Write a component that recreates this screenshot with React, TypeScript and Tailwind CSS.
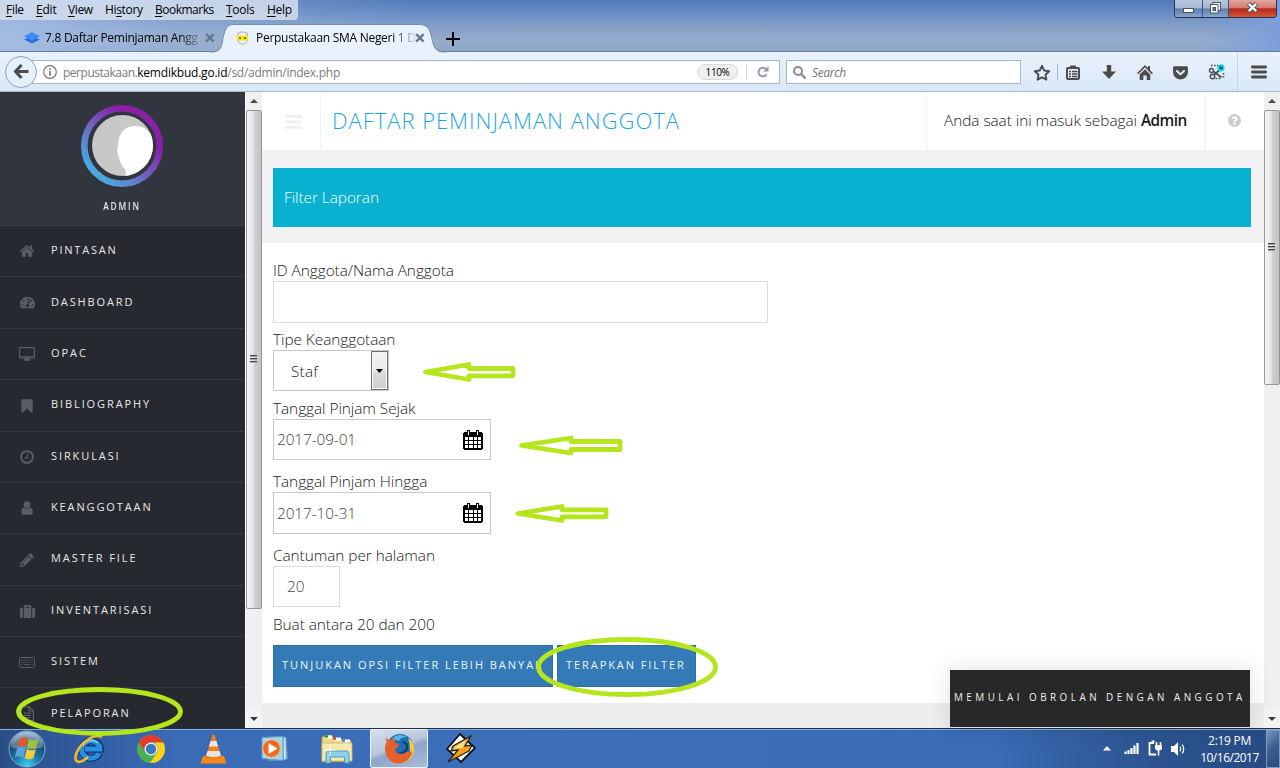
import type { ReactNode } from "react";
import { FaTachometerAlt, FaSuitcase, FaGetPocket } from "react-icons/fa";

const CIRCLE =
  "M1664 896q0 209-103 385.5t-279.5 279.5-385.5 103-385.5-103-279.5-279.5-103-385.5 103-385.5 279.5-279.5 385.5-103 385.5 103 279.5 279.5 103 385.5z";

function Glyph({ d, box = "0 0 1792 1792", size = 16 }: { d: string; box?: string; size?: number }) {
  return (
    <svg width={size} height={size} viewBox={box} fill="currentColor" fillRule="evenodd">
      <path d={d} />
    </svg>
  );
}

const homePath =
  "M1408 992v480q0 26-19 45t-45 19h-384v-384h-256v384h-384q-26 0-45-19t-19-45v-480q0-1 .5-3t.5-3l575-474 575 474q1 2 1 6zm223-69l-62 74q-8 9-21 11h-3q-13 0-21-7l-692-577-692 577q-12 8-24 7-13-2-21-11l-62-74q-8-10-7-23.5t11-21.5l719-599q32-26 76-26t76 26l244 204v-195q0-14 9-23t23-9h192q14 0 23 9t9 23v408l219 182q10 8 11 21.5t-7 23.5z";
const userPath =
  "M1536 1399q0 109-62.5 187t-150.5 78h-854q-88 0-150.5-78t-62.5-187q0-85 8.5-160.5t31.5-152 58.5-131 94-89 134.5-34.5q131 128 313 128t313-128q76 0 134.5 34.5t94 89 58.5 131 31.5 152 8.5 160.5zm-256-887q0 159-112.5 271.5t-271.5 112.5-271.5-112.5-112.5-271.5 112.5-271.5 271.5-112.5 271.5 112.5 112.5 271.5z";
const pencilPath =
  "M491 1536l91-91-235-235-91 91v107h128v128h107zm523-928q0-22-22-22-10 0-17 7l-542 542q-7 7-7 17 0 22 22 22 10 0 17-7l542-542q7-7 7-17zm-54-192l416 416-832 832h-416v-416zm683 96q0 53-37 90l-166 166-416-416 166-165q36-38 90-38 53 0 91 38l235 234q37 39 37 91z";
const bookmarkPath =
  "M1420 128q23 0 44 9 33 13 52.5 41t19.5 62v1289q0 34-19.5 62t-52.5 41q-19 8-44 8-48 0-83-32l-441-424-441 424q-36 33-83 33-23 0-44-9-33-13-52.5-41t-19.5-62v-1289q0-34 19.5-62t52.5-41q21-9 44-9h1048z";
const clockPath =
  "M1024 544v448q0 14-9 23t-23 9h-320q-14 0-23-9t-9-23v-64q0-14 9-23t23-9h224v-352q0-14 9-23t23-9h64q14 0 23 9t9 23zM1440 896q0-148-73-273t-198-198-273-73-273 73-198 198-73 273 73 273 198 198 273 73 273-73 198-198 73-273z" +
  CIRCLE;
const questionPath =
  "M1024 1376v-192q0-14-9-23t-23-9h-192q-14 0-23 9t-9 23v192q0 14 9 23t23 9h192q14 0 23-9t9-23zm256-672q0-88-55.5-163t-138.5-116-170-41q-243 0-371 213-15 24 8 42l132 100q7 6 19 6 16 0 25-12 53-68 86-92 34-24 86-24 48 0 85.5 26t37.5 59q0 38-20 61t-68 45q-63 28-115.5 86.5t-52.5 125.5v36q0 14 9 23t23 9h192q14 0 23-9t9-23q0-19 21.5-49.5t54.5-49.5q32-18 49-28.5t46-35 44.5-48 28-60.5 12.5-81z" +
  CIRCLE;

const Desktop = () => (
  <svg width="16" height="14" viewBox="0 0 16 14" fill="none" stroke="currentColor" strokeWidth="1.2">
    <rect x="0.6" y="0.6" width="14.8" height="10.4" rx="0.8" />
    <path d="M0.6 9.8h14.8" />
    <path d="M6 11.5h4v1.2H6zM5 13.2h6" />
  </svg>
);
const Keyboard = () => (
  <svg width="16" height="11" viewBox="0 0 16 11" fill="none" stroke="currentColor">
    <rect x="0.5" y="0.5" width="15" height="10" rx="1" />
    <path d="M2.5 3h11.2M2.5 5.2h11.2" strokeDasharray="1.2 0.9" />
    <path d="M2.5 7.6h1.2M5 7.6h6M12.4 7.6h1.2" />
  </svg>
);
const FileText = () => (
  <svg width="13" height="15" viewBox="0 0 13 15" fill="none" stroke="currentColor" strokeWidth="1.2">
    <path d="M0.6 0.6h7.4l4.4 4.4v9.4H0.6zM8 0.6V5h4.4M3 7.2h7M3 9.4h7M3 11.6h7" />
  </svg>
);

const menu: { label: string; icon: ReactNode; cls: string; text: string }[] = [
  { label: "PINTASAN", icon: <Glyph d={homePath} box="0 0 1664 1792" />, cls: "h-[51px]", text: "pb-[2px] tracking-[1.8px]" },
  { label: "DASHBOARD", icon: <FaTachometerAlt size={15} />, cls: "h-[52px]", text: "tracking-[1.88px]" },
  { label: "OPAC", icon: <Desktop />, cls: "h-[51px]", text: "pb-[2px] tracking-[1.95px]" },
  { label: "BIBLIOGRAPHY", icon: <Glyph d={bookmarkPath} />, cls: "h-[52px]", text: "pb-[2px] tracking-[1.9px]" },
  { label: "SIRKULASI", icon: <Glyph d={clockPath} />, cls: "h-[51px]", text: "pb-[2px] tracking-[1.9px]" },
  { label: "KEANGGOTAAN", icon: <Glyph d={userPath} />, cls: "h-[51px]", text: "pb-[2px] tracking-[1.88px]" },
  { label: "MASTER FILE", icon: <Glyph d={pencilPath} />, cls: "h-[52px]", text: "pb-[2px] tracking-[1.92px]" },
  { label: "INVENTARISASI", icon: <FaSuitcase size={15} />, cls: "h-[51px]", text: "pb-[2px] tracking-[1.92px]" },
  { label: "SISTEM", icon: <Keyboard />, cls: "h-[51px]", text: "pb-[2px] tracking-[1.95px]" },
  { label: "PELAPORAN", icon: <FileText />, cls: "h-[51px]", text: "tracking-[1.88px]" },
];

const browserMenu = [
  { first: "F", rest: "ile", cls: "w-[30px] tracking-[-0.3px]" },
  { first: "E", rest: "dit", cls: "w-[32px] tracking-[-0.2px]" },
  { first: "V", rest: "iew", cls: "w-[37px] tracking-[-0.4px]" },
  { pre: "Hi", first: "s", rest: "tory", cls: "w-[50px] tracking-[-0.33px]" },
  { first: "B", rest: "ookmarks", cls: "w-[71px] tracking-[-0.5px]" },
  { first: "T", rest: "ools", cls: "w-[41px] tracking-[-0.3px]" },
  { first: "H", rest: "elp", cls: "w-[28px] tracking-[-0.3px]" },
];

function TabClose() {
  return (
    <svg width="10" height="10" viewBox="0 0 10 10" className="shrink-0" stroke="#66778d" strokeWidth="2.4">
      <path d="M1.2 1.2l7.4 7.4M8.6 1.2L1.2 8.6" />
    </svg>
  );
}

function TitleBar() {
  return (
    <div className="relative h-[52px] bg-[linear-gradient(90deg,#a9c1e8cc_0%,#9db6dc66_14%,transparent_34%,transparent_94%,#7c9edb_100%),linear-gradient(180deg,#507ab9_0%,#6288c2_20%,#88a2c8_55%,#96accb_80%,#8ea5c6_100%)]">
      <div className="flex justify-between">
        <div className="flex h-5 w-[298px] items-center rounded-br-[4px] bg-[#d5dfef]/85 pl-[6px] text-[12px] leading-5 text-black">
          {browserMenu.map((m) => (
            <span key={m.rest} className={m.cls}>
              {m.pre}
              <span className="underline underline-offset-2">{m.first}</span>
              {m.rest}
            </span>
          ))}
        </div>
        <div className="mr-[3px] flex h-[18px] w-[103px] overflow-hidden rounded-b-[4px] border border-t-0 border-[#26354d]">
          <div className="flex w-[28px] items-end justify-center border-r border-[#3c5580] bg-[linear-gradient(#b9c7dd_0%,#a3b5d1_48%,#5c7cad_52%,#89a6d0_100%)] pb-[4px]">
            <div className="h-[5px] w-[11px] border border-[#4d5360] bg-white" />
          </div>
          <div className="flex w-[26px] items-start justify-center border-r border-[#3c5580] bg-[linear-gradient(#b9c7dd_0%,#a3b5d1_48%,#5c7cad_52%,#89a6d0_100%)] pt-[2px]">
            <svg width="13" height="12" viewBox="0 0 13 12" fill="#fff" stroke="#4d5360">
              <rect x="4" y="0.5" width="7.5" height="8" />
              <rect x="1.5" y="2.5" width="7.5" height="8.5" />
              <rect x="4" y="5.5" width="2.5" height="3" fill="#5c7cad" />
            </svg>
          </div>
          <div className="flex flex-1 items-start justify-center bg-[linear-gradient(#e3a79c_0%,#d27d6f_45%,#b5281a_52%,#d4573a_100%)] pt-[2px]">
            <svg width="13" height="11" viewBox="0 0 13 11">
              <path d="M2.5 1.5l8 8M10.5 1.5l-8 8" stroke="#4d4a55" strokeWidth="4.4" />
              <path d="M2.8 1.8l7.4 7.4M10.2 1.8L2.8 9.2" stroke="#fff" strokeWidth="2.4" />
            </svg>
          </div>
        </div>
      </div>
      <div className="absolute inset-x-0 bottom-0 flex h-7 border-b border-[#5f7ea8]">
        <div className="flex w-[218px] items-center pl-[24px]">
          <svg width="16" height="12" viewBox="0 0 16 12" className="shrink-0">
            <path d="M0 7.5l8-3.4 8 3.4-8 4z" fill="#2a6fdc" />
            <path d="M0 4.2L8 0l8 4.2-8 4.3z" fill="#3f8cff" />
          </svg>
          <span className="ml-[5px] w-[160px] bg-[linear-gradient(90deg,#000_84%,#00000022_97%)] bg-clip-text pt-px text-[12px] tracking-[-0.27px] whitespace-nowrap text-transparent">
            7.8 Daftar Peminjaman Angg
          </span>
          <span className="pt-px">
            <TabClose />
          </span>
        </div>
        <div className="relative flex w-[221px] items-center pl-[18px]">
          <svg width="236" height="29" viewBox="0 0 236 29" className="absolute top-0 left-[-8px]">
            <path d="M0 28.5C14 28.5 11 20 14 10C16 2 19 0.5 25 0.5H208C216 0.5 219 3 221 11C224 22 223 28.5 236 28.5Z" fill="#e9f2fc" />
            <path d="M0 28C14 28 11 20 14 10C16 2 19 0.5 25 0.5H208C216 0.5 219 3 221 11C224 22 223 28 236 28" fill="none" stroke="#6f8db5" />
          </svg>
          <svg width="13" height="14" viewBox="0 0 13 14" className="relative shrink-0">
            <path d="M1 2q5.500-3.600 11 0v7.500q-1.500 4-5.500 4.300Q2.500 13.500 1 9.500z" fill="#bfc4c8" />
            <path d="M2.500 3q4-2.500 8 0v7q-1.500 2.500-4 2.600Q4 12.500 2.500 10z" fill="#eceeea" />
            <rect x="0.500" y="4.500" width="12" height="5" rx="2.400" fill="#f6ea10" />
            <path d="M3 7h2M8 7h2" stroke="#5a4c00" strokeWidth="1.600" />
          </svg>
          <span className="relative ml-[7px] w-[159px] bg-[linear-gradient(90deg,#000_86%,#00000022_99%)] bg-clip-text pt-px text-[12px] tracking-[-0.28px] whitespace-nowrap text-transparent">
            Perpustakaan SMA Negeri 1 D
          </span>
          <span className="relative pt-px">
            <TabClose />
          </span>
        </div>
        <div className="flex items-center pt-[2px] pl-[7px]">
          <svg width="14" height="14" viewBox="0 0 14 14" stroke="#000" strokeWidth="2">
            <path d="M7 0v14M0 7h14" />
          </svg>
        </div>
      </div>
    </div>
  );
}

function Toolbar() {
  return (
    <div className="flex h-10 items-center border-b border-[#a3b8cf] bg-[linear-gradient(#e9f2fc,#d9e8f7)] pl-[5px]">
      <div className="relative z-10 flex h-[32px] w-[32px] shrink-0 items-center justify-center rounded-full border border-[#8fa3bb] bg-[#e6f0fa]">
        <svg width="16" height="15" viewBox="0 0 16 15" fill="none" stroke="#4a4c50" strokeWidth="3">
          <path d="M8.500 1L2.500 7.500l6 6.500M2.500 7.500H15.500" />
        </svg>
      </div>
      <div className="mt-px -ml-[5px] flex h-6 w-[748px] shrink-0 items-center border border-[#a9bacd] bg-white pl-[10px]">
        <svg width="14" height="14" viewBox="0 0 14 14" fill="none" stroke="#75777a">
          <circle cx="7" cy="7" r="6.300" strokeWidth="1.200" />
          <path d="M7 6v4.800M7 3.200v1.700" strokeWidth="1.700" />
        </svg>
        <div className="ml-[6px] flex w-[634px] pt-px text-[12px] text-[#7b7b7b]">
          <span className="tracking-[-0.48px]">perpustakaan.</span>
          <span className="tracking-[-0.22px] text-black">kemdikbud.go.id</span>
          <span className="tracking-[-0.26px]">/sd/admin/index.php</span>
        </div>
        <div className="flex h-4 w-[41px] shrink-0 items-center justify-center rounded-full border border-[#dadada] bg-[#efefef] text-[10px] tracking-[-0.4px] text-black">
          110%
        </div>
        <div className="ml-[8px] h-4 w-px bg-[#dcdcdc]" />
        <svg width="12" height="12" viewBox="0 0 12 12" fill="none" className="ml-[10px]">
          <path d="M9.500 8.200A4.300 4.300 0 1 1 9 3.200" stroke="#8f9aa8" strokeWidth="2" />
          <path d="M11.500 0v5.500H6z" fill="#8f9aa8" />
        </svg>
      </div>
      <div className="mt-px ml-[6px] flex h-6 w-[235px] shrink-0 items-center border border-[#a9bacd] bg-white pl-[6px]">
        <svg width="13" height="13" viewBox="0 0 13 13" fill="none" stroke="#8b8b8b" strokeWidth="2">
          <circle cx="5" cy="5" r="4" />
          <path d="M8 8l4.500 4.500" strokeWidth="2.400" />
        </svg>
        <span className="ml-[6px] pt-px text-[12px] tracking-[-0.35px] text-[#757575] italic">Search</span>
      </div>
      <div className="flex h-full flex-1 items-center pt-px text-[#4c4c4c]">
        <svg width="18" height="17" viewBox="0 0 18 17" fill="none" stroke="currentColor" strokeWidth="1.900" className="ml-[12px]">
          <path d="M9 1.800l2.200 4.700 5 .7-3.700 3.500.9 5L9 13.300l-4.400 2.400.9-5L1.800 7.200l5-.7z" strokeLinejoin="round" />
        </svg>
        <div className="ml-[6px] h-4 w-px bg-[#a9bacd]" />
        <svg width="14" height="15" viewBox="0 0 14 15" className="ml-[8px]" fill="none" stroke="currentColor">
          <rect x="1" y="3" width="12" height="11" rx="1" strokeWidth="2" />
          <path d="M4 2h6" strokeWidth="3" />
          <path d="M3 6.500h2M6 6.500h5.500M3 9h2M6 9h5.500M3 11.500h2M6 11.500h5.500" strokeWidth="1.300" />
        </svg>
        <svg width="14" height="14" viewBox="0 0 14 14" className="ml-[22px]" fill="currentColor">
          <path d="M4.800 0h4.400v6.500H14L7 14 0 6.500h4.800z" />
        </svg>
        <svg width="16" height="15" viewBox="0 0 16 15" className="ml-[21px]" fill="currentColor">
          <path d="M8 0l3 3V1h2v4l3 3.200-1.200 1.100L8 2.600 1.200 9.300 0 8.200z" />
          <path d="M8 4.200l5.300 5.300V15h-3.600v-4.500H6.300V15H2.700V9.500z" />
        </svg>
        <FaGetPocket size={17} className="ml-[19px]" />
        <svg width="17" height="16" viewBox="0 0 17 16" className="ml-[19px]" fill="none" stroke="currentColor">
          <circle cx="3.500" cy="6.500" r="2" strokeWidth="1.400" />
          <circle cx="4.500" cy="12.500" r="2.200" strokeWidth="1.400" />
          <path d="M5.500 7.500l8 6M6 11l6-5.500" strokeWidth="1.700" />
          <path d="M3 1.500h7M15.500 9v6M7.500 14.500h6" strokeWidth="1.600" strokeDasharray="1.600 1.400" />
          <circle cx="13" cy="3.800" r="3.600" fill="#00e0ee" stroke="none" />
          <path d="M13 1.800v4M11.200 2.800l3.600 2M14.800 2.800l-3.600 2" stroke="#123a55" strokeWidth="1" />
        </svg>
        <div className="ml-[12px] h-full w-px bg-[#b9c9da]/70" />
        <svg width="16" height="14" viewBox="0 0 16 14" className="ml-[13px]" stroke="currentColor" strokeWidth="2.800" strokeLinecap="round">
          <path d="M1.400 2h13.200M1.400 7h13.200M1.400 12h13.200" />
        </svg>
      </div>
    </div>
  );
}

function ScrollBar({ thumb, rest, kind }: { thumb: string; rest: string; kind: string }) {
  return (
    <div className={kind}>
      <div className="flex h-[18px] items-center justify-center">
        <svg width="8" height="4" viewBox="0 0 8 4">
          <path d="M4 0l4 4H0z" fill="#4a4a4a" />
        </svg>
      </div>
      <div className={thumb}>
        <div className="flex h-[8px] w-[7px] flex-col justify-between">
          <div className="h-[2px] border-b border-[#a8a8a8] bg-[#444]" />
          <div className="h-[2px] border-b border-[#a8a8a8] bg-[#444]" />
          <div className="h-[2px] border-b border-[#a8a8a8] bg-[#444]" />
        </div>
      </div>
      <div className={rest} />
      <div className="flex h-[18px] items-center justify-center bg-[#f3f3f3]">
        <svg width="8" height="4" viewBox="0 0 8 4">
          <path d="M0 0h8L4 4z" fill="#3a3a3a" />
        </svg>
      </div>
    </div>
  );
}

function Sidebar() {
  return (
    <div className="flex w-[245px] shrink-0 flex-col overflow-hidden bg-[#262930]">
      <div className="flex h-[134px] shrink-0 flex-col items-center border-b border-[#3a3d43] bg-[#31353e] pt-[13px] pr-px">
        <svg width="82" height="82" viewBox="0 0 82 82">
          <defs>
            <linearGradient id="ring" x1="0.15" y1="0.85" x2="0.8" y2="0.15">
              <stop offset="0" stopColor="#4aa8e0" />
              <stop offset="0.45" stopColor="#6f62c0" />
              <stop offset="0.85" stopColor="#8a1fa8" />
            </linearGradient>
            <clipPath id="face">
              <circle cx="41.5" cy="40.500" r="30.500" />
            </clipPath>
          </defs>
          <circle cx="41" cy="41" r="37.700" fill="none" stroke="url(#ring)" strokeWidth="6.600" />
          <g clipPath="url(#face)">
            <rect width="82" height="82" fill="#c8c8c8" />
            <path d="M44 73L45 66Q39 59 38 52Q35 46 37 42Q37 21 55 21Q63 21 68 27L80 40V75H44Z" fill="#fff" />
          </g>
        </svg>
        <div className="mt-[11px] flex h-4 w-[38px] scale-x-[0.76] justify-center text-[11px] leading-4 font-semibold tracking-[2.4px] text-[#e9e9e9]">
          ADMIN
        </div>
      </div>
      {menu.map((m) => (
        <div key={m.label} className={`flex shrink-0 items-center border-b border-[#37393e] text-[11px] text-[#e8e8e8] ${m.cls}`}>
          <span className="ml-[17px] flex w-5 justify-center text-[#5b5d63]">{m.icon}</span>
          <span className={`ml-[14px] whitespace-nowrap ${m.text}`}>{m.label}</span>
        </div>
      ))}
    </div>
  );
}

function Calendar() {
  return (
    <svg width="20" height="20" viewBox="0 0 20 20" shapeRendering="crispEdges">
      <path d="M1 2h18v1h1v16h-1v1H1v-1H0V3h1z" fill="#000" />
      <path d="M4 0h3v5H4zM13 0h3v5h-3z" fill="#000" />
      <path d="M5 1h1v4H5zM14 1h1v4h-1z" fill="#fff" />
      <path
        d="M2 7h3v3H2zM6 7h4v3H6zM11 7h3v3h-3zM15 7h3v3h-3zM2 11h3v3H2zM6 11h4v3H6zM11 11h3v3h-3zM15 11h3v3h-3zM2 15h3v3H2zM6 15h4v3H6zM11 15h3v3h-3zM15 15h3v3h-3z"
        fill="#fff"
      />
    </svg>
  );
}

function Label({ children }: { children: ReactNode }) {
  return <div className="h-[22px] pt-px leading-[22px] tracking-[-0.06px]">{children}</div>;
}

function Main() {
  return (
    <div className="flex w-[1002px] shrink-0 flex-col bg-[#ededed] text-[15.4px] font-light text-[#1a1a1a]">
      <div className="flex h-[58px] shrink-0 bg-white">
        <div className="mt-[2px] flex w-[59px] items-center justify-center border-r border-[#f0f0f0] pl-[4px]">
          <svg width="17" height="14" viewBox="0 0 17 14" stroke="#f0f0f0" strokeWidth="3">
            <path d="M0 1.500h17M0 7h17M0 12.500h17" />
          </svg>
        </div>
        <div className="flex w-[605px] items-center pb-[2px] pl-[11px] text-[22px] tracking-[0.97px] text-[#1ca5df]">DAFTAR PEMINJAMAN ANGGOTA</div>
        <div className="flex w-[280px] items-center border-x border-[#f0f0f0] pl-[17px] tracking-[-0.05px] whitespace-pre">
          Anda saat ini masuk sebagai <span className="font-semibold tracking-[-0.55px]">Admin</span>
        </div>
        <div className="flex h-[57px] flex-1 items-center justify-center pr-[2px] text-[#cbcbcb]">
          <Glyph d={questionPath} size={15} />
        </div>
      </div>
      <div className="h-[93px] shrink-0 bg-[#f1f1f1] px-[11px] pt-[18px] pr-[13px]">
        <div className="flex h-[59px] items-center bg-[#08b1d0] pl-[11px] tracking-[-0.06px] text-white">Filter Laporan</div>
      </div>
      <div className="h-[460px] shrink-0 bg-white pt-[16px] pl-[11px]">
        <Label>ID Anggota/Nama Anggota</Label>
        <div className="mb-[5px] h-[42px] w-[495px] border border-[#dcdcdc]" />
        <Label>Tipe Keanggotaan</Label>
        <div className="mb-[6px] flex h-[41px] w-[116px] items-center justify-between border border-[#c8c8c8] pl-[17px]">
          <span className="pt-[2px] tracking-[0.2px]">Staf</span>
          <div className="flex h-[39px] w-[17px] items-center justify-center border border-[#707070] bg-[linear-gradient(#f2f2f2_0%,#ebebeb_50%,#dcdcdc_51%,#cfcfcf_100%)] shadow-[inset_0_0_0_1px_#f8f8f8]">
            <svg width="7" height="4" viewBox="0 0 7 4">
              <path d="M0 0h7L3.500 4z" fill="#000" />
            </svg>
          </div>
        </div>
        <Label>Tanggal Pinjam Sejak</Label>
        <div className="mb-[10px] flex h-[41px] w-[218px] items-center justify-between border border-[#c8c8c8] pr-[7px] pl-[3px] text-[#444]">
          <span className="tracking-[-0.12px]">2017-09-01</span>
          <Calendar />
        </div>
        <Label>Tanggal Pinjam Hingga</Label>
        <div className="mb-[10px] flex h-[42px] w-[218px] items-center justify-between border border-[#c8c8c8] pr-[7px] pl-[3px] text-[#444]">
          <span className="pt-[2px] tracking-[-0.12px]">2017-10-31</span>
          <Calendar />
        </div>
        <Label>Cantuman per halaman</Label>
        <div className="mb-[6px] flex h-[41px] w-[67px] items-center border border-[#dcdcdc] pt-px pl-[13px] text-[#444]">20</div>
        <Label>Buat antara 20 dan 200</Label>
        <div className="mt-[10px] flex gap-1 text-[11px] font-normal text-[#eef4fa]">
          <div className="flex h-[42px] w-[280px] items-center border border-[#2e6da4] bg-[#337ab7] pb-px pl-[8px] tracking-[1.97px] whitespace-nowrap">
            TUNJUKAN OPSI FILTER LEBIH BANYAK
          </div>
          <div className="flex h-[42px] w-[139px] items-center border border-[#2e6da4] bg-[#337ab7] pb-px pl-[8px] tracking-[1.93px] whitespace-nowrap">
            TERAPKAN FILTER
          </div>
        </div>
      </div>
    </div>
  );
}

function StartOrb() {
  return (
    <svg width="38" height="38" viewBox="0 0 38 38">
      <defs>
        <radialGradient id="orb" cx="0.5" cy="0.95" r="0.9">
          <stop offset="0" stopColor="#3fd0f5" />
          <stop offset="0.4" stopColor="#1b78a8" />
          <stop offset="0.75" stopColor="#1d4a70" />
          <stop offset="1" stopColor="#7fa6c4" />
        </radialGradient>
      </defs>
      <circle cx="19" cy="19" r="18" fill="url(#orb)" stroke="#86a9cc" />
      <path d="M3 17a16 15 0 0 1 32 0Q19 22 3 17z" fill="#fff" opacity="0.28" />
      <path d="M11.500 9q4-3 8.500-.5l-2 8.500q-4-2.500-8.500 0z" fill="#e5572a" />
      <path d="M21 9q4 2.500 9.500 0l-2.300 8.500q-5 2.500-9 0z" fill="#9ac43a" />
      <path d="M9 18.500q4-2.500 8.500 0l-2.200 9q-4-2.500-8.500 0z" fill="#5aa5e0" />
      <path d="M18.800 19q4.500 2.500 9 0l-2.200 9q-5 2.500-9 0z" fill="#fbc93a" />
    </svg>
  );
}

function IE() {
  return (
    <svg width="32" height="32" viewBox="0 0 32 32" fill="none">
      <path d="M26.500 20.500A9.300 8.800 0 1 1 27.500 16H12" stroke="#0e2f66" strokeWidth="6.800" />
      <path d="M26 20.500A9.200 8.600 0 1 1 27 16H12" stroke="#2590e0" strokeWidth="4.900" />
      <path d="M10 13a9 8 0 0 1 15-3" stroke="#7fd0ff" strokeWidth="1.500" />
      <path d="M29 4C22 0 8 9 3.500 20C1 27 3 30 8 28.500C11 27.500 14 25 15 24" stroke="#f2b92c" strokeWidth="2.600" />
    </svg>
  );
}

function Chrome() {
  return (
    <svg width="28" height="30" viewBox="0 0 28 30">
      <circle cx="14" cy="15" r="14" fill="#4caf50" />
      <path d="M1.800 8A14 14 0 0 1 26.300 8.500H14A6.500 6.500 0 0 0 8 13.500L7.600 17z" fill="#e33b2e" />
      <path d="M26.300 8.500A14 14 0 0 1 13 29L20 18.500Q22 12 17 8.500z" fill="#fcd21c" />
      <circle cx="14" cy="15" r="6.500" fill="#f2f2f2" />
      <circle cx="14" cy="15" r="5.200" fill="#3b78c4" />
    </svg>
  );
}

function Vlc() {
  return (
    <svg width="27" height="30" viewBox="0 0 27 30">
      <path d="M3 22h21l2.500 7.500H.5z" fill="#f28a14" />
      <path d="M12.300 1q1.200-1 2.400 0L21.500 24q-8 4-16 0z" fill="#f08018" />
      <path d="M10.600 7h5.800l1.700 5.500H8.900z" fill="#e6e6e6" />
      <path d="M7.500 17h12l1.500 4.500q-7.500 3-15 0z" fill="#e6e6e6" />
    </svg>
  );
}

function Wmp() {
  return (
    <svg width="27" height="26" viewBox="0 0 27 26">
      <path d="M8 1h17l1.500 22L8 25z" fill="#8fc3de" stroke="#4e90b8" />
      <path d="M1 1.500l21-1v24L1 22.500z" fill="#a9d4e8" stroke="#5b9fc4" />
      <path d="M23.800 2v21.500" stroke="#e0f2fa" />
      <circle cx="10.500" cy="12.500" r="8.800" fill="#ee6a1c" stroke="#f9b98a" />
      <path d="M7.500 7l9 5.500-9 5.500z" fill="#fff" />
    </svg>
  );
}

function Explorer() {
  return (
    <svg width="33" height="30" viewBox="0 0 33 30">
      <path d="M1 3L9 1l4 3 17 3 1 20-30 1z" fill="#ecd98a" stroke="#b79b44" strokeWidth="0.800" />
      <path d="M4 3h7M12 5h8M21 7h8" stroke="#fff" strokeWidth="3" />
      <path d="M4 2.500h3" stroke="#1fa52a" strokeWidth="2.500" />
      <path d="M12 4.500h3" stroke="#d63a24" strokeWidth="2.500" />
      <path d="M21 6.500h3" stroke="#2c7fd8" strokeWidth="2.500" />
      <path d="M1 9h30v18H1z" fill="#f6e9ae" stroke="#cdb566" strokeWidth="0.800" />
      <path d="M5 29v-9q0-3 3-3h17q3 0 3 3v9h-4.500v-6h-14v6z" fill="#8fd0e8" stroke="#4c9fc4" />
      <path d="M9 10v12M3 16h12" stroke="#fff" strokeWidth="0.800" />
    </svg>
  );
}

function Firefox() {
  return (
    <svg width="31" height="31" viewBox="0 0 31 31">
      <circle cx="16" cy="14" r="13" fill="#1c6fb4" />
      <path d="M8 6q6-7 15-2-7 0-8 4z" fill="#56b8ea" />
      <path d="M24 5q7 5 6 13-2 10-12 12 9-6 8-14 0-6-2-11z" fill="#f9cf2f" />
      <path d="M2 4q1 3 4 3 3-2 6-1-2 3-1 4 4 0 4 2-1 3-4 4 0 5 6 5 4 0 5-2 4-1 4 1 2-2 1-5 2 5 0 8-4 7-12 7.500Q4 30 1.500 20 0 12 3 9 1.500 7 2 4z" fill="#e5602a" />
      <path d="M17 10q6 0 5 5-2 5-8 4 4 3 8 0 4-5 1-9-2-3-6 0z" fill="#123a6a" />
    </svg>
  );
}

function Winamp() {
  return (
    <svg width="30" height="31" viewBox="0 0 30 31">
      <path d="M14 1l15 14-14 14L1 16z" fill="#fff" stroke="#111" strokeWidth="1.800" />
      <path d="M25 3L7 13l-2 5 7-1L2 29 23 18l3-6-7 1z" fill="#f7a21b" stroke="#222" strokeWidth="1.300" />
      <path d="M21 6L9 14l-1 2 8-1z" fill="#fde08a" />
    </svg>
  );
}

function Taskbar() {
  return (
    <div className="flex h-10 shrink-0 border-t border-[#1b2f4f] bg-[linear-gradient(90deg,#2a4f88_0%,#2f5797_4%,#3a6bb6_14%,#3c6fba_45%,#3a6bb6_78%,#335f9f_84%,#2c5490_90%,#274b83_100%)] shadow-[inset_0_1px_0_#8fabd4]">
      <div className="flex w-[54px] items-center justify-center">
        <StartOrb />
      </div>
      <div className="flex w-[70px] items-center justify-center">
        <IE />
      </div>
      <div className="flex w-[54px] items-center justify-center">
        <Chrome />
      </div>
      <div className="flex w-[70px] items-center justify-center">
        <Vlc />
      </div>
      <div className="flex w-[52px] items-center justify-center">
        <Wmp />
      </div>
      <div className="flex w-[70px] items-center justify-center pl-[4px]">
        <Explorer />
      </div>
      <div className="flex w-[58px] items-center justify-center rounded-[2px] border border-[#eef4fb] bg-[linear-gradient(160deg,#d7dfee_0%,#b9c6de_45%,#8ea4cb_55%,#a9bcdc_100%)]">
        <Firefox />
      </div>
      <div className="flex w-[66px] items-center justify-center">
        <Winamp />
      </div>
      <div className="ml-auto flex items-center">
        <svg width="8" height="5" viewBox="0 0 8 5">
          <path d="M4 0l4 4.500H0z" fill="#fff" />
        </svg>
        <svg width="16" height="13" viewBox="0 0 16 13" className="ml-[13px]" stroke="#fff" strokeWidth="2.200">
          <path d="M1.500 12V9.500M4.500 12V8M7.500 12V6M10.500 12V3.500M13.500 12V1" />
        </svg>
        <svg width="15" height="17" viewBox="0 0 15 17" fill="none" stroke="#fff" className="ml-[8px]">
          <path d="M6 3H1.500v11.500H8M3.500 1.500h3" strokeWidth="1.800" />
          <path d="M7 5h7v3q0 2.500-3.500 2.500T7 8z" fill="#fff" stroke="none" />
          <path d="M8.500 2v3M12.500 2v3M10.500 10v5.500" strokeWidth="1.600" />
        </svg>
        <svg width="15" height="14" viewBox="0 0 15 14" fill="none" stroke="#fff" className="ml-[8px]">
          <path d="M0 4h3l4-4v14l-4-4H0z" fill="#fff" stroke="none" />
          <path d="M9 4.500q1.500 2.500 0 5M11.200 2.500q3 4.500 0 9" strokeWidth="1.200" />
        </svg>
        <div className="ml-[13px] flex w-[61px] flex-col items-center text-[12px] leading-[17px] whitespace-nowrap text-white">
          <span className="tracking-[-0.3px]">2:19 PM</span>
          <span className="tracking-[-0.5px]">10/16/2017</span>
        </div>
        <div className="ml-[6px] h-[38px] w-[14px] border border-[#7f9ac2] bg-[linear-gradient(135deg,#7b95bb_0%,#3b5c8c_50%,#27497c_100%)]" />
      </div>
    </div>
  );
}

function Annotations() {
  return (
    <svg width="1280" height="768" viewBox="0 0 1280 768" fill="none" stroke="#b5e61d" strokeWidth="4.800" className="pointer-events-none absolute top-0 left-0">
      <ellipse cx="99.500" cy="711.500" rx="81" ry="22" />
      <ellipse cx="627" cy="667" rx="88.500" ry="27.500" />
      <path d="M425.500 372L469 364.500V368.500H513V375.800H469V379.500Z" strokeLinejoin="round" />
      <path d="M521.500 445.500L571 438V441.500H620V449.500H571V453Z" strokeLinejoin="round" />
      <path d="M518 513.500L562 506.500V509.800H606V516.800H562V520.500Z" strokeLinejoin="round" />
    </svg>
  );
}

export default function App() {
  return (
    <div className="relative flex h-[768px] w-[1280px] flex-col overflow-hidden bg-white font-['Open_Sans','Noto_Sans',sans-serif]">
      <TitleBar />
      <Toolbar />
      <div className="flex h-[636px] shrink-0 overflow-hidden">
        <Sidebar />
        <ScrollBar
          kind="flex w-[17px] shrink-0 flex-col border-l border-white bg-[#f0f0f0]"
          thumb="flex h-[499px] items-center justify-center rounded-[2px] border border-[#979797] bg-[linear-gradient(90deg,#f5f5f5_0%,#e8e8ea_40%,#cfcfd3_55%,#c2c2c8_100%)] pr-[2px] pb-[2px]"
          rest="flex-1"
        />
        <Main />
        <ScrollBar
          kind="flex w-[16px] shrink-0 flex-col bg-[#f0f0f0]"
          thumb="flex h-[275px] items-center justify-center rounded-[2px] border border-[#979797] bg-[linear-gradient(90deg,#f5f5f5_0%,#e8e8ea_40%,#cfcfd3_55%,#c2c2c8_100%)] pr-[2px] pb-[2px]"
          rest="flex-1"
        />
      </div>
      <Taskbar />
      <div className="absolute top-[670px] left-[950px] flex h-[57px] w-[300px] items-center bg-[#282828] pb-[2px] pl-[4px] text-[9.9px] tracking-[3.48px] whitespace-nowrap text-[#f0f0f0] shadow-[0_0_24px_rgba(0,0,0,0.12)]">
        MEMULAI OBROLAN DENGAN ANGGOTA
      </div>
      <Annotations />
    </div>
  );
}
